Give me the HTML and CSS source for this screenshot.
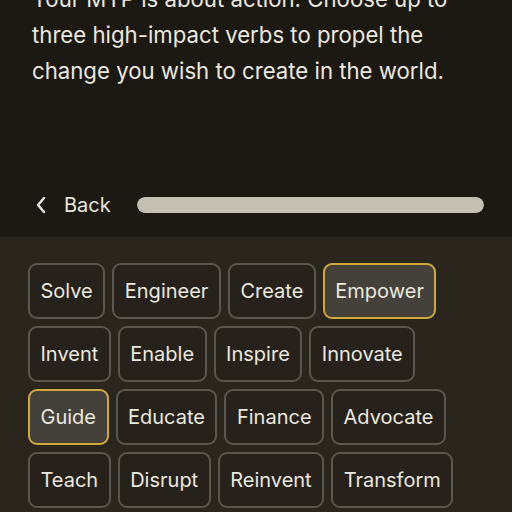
FILE: index.html
```html
<!DOCTYPE html>
<html lang="en">
<head>
  <meta charset="UTF-8">
  <title>Choose your verbs</title>
  <link rel="stylesheet" href="styles.css">
</head>
<body>
  <section class="intro">
    <p class="lead">Your MTP is about action. Choose up to three high-impact verbs to propel the change you wish to create in the world.</p>

    <div class="nav">
      <a href="#" class="back">
        <svg width="12" height="18" viewBox="0 0 12 18"><path d="M9 2 L3 9 L9 16" fill="none" stroke="#e8e5dc" stroke-width="2.4" stroke-linecap="round" stroke-linejoin="round"/></svg>
        <span>Back</span>
      </a>
      <div class="progress"><div class="progress-fill" style="width: 100%"></div></div>
    </div>
  </section>

  <section class="verbs">
    <div class="row">
      <button class="chip">Solve</button>
      <button class="chip">Engineer</button>
      <button class="chip">Create</button>
      <button class="chip selected">Empower</button>
    </div>
    <div class="row">
      <button class="chip">Invent</button>
      <button class="chip">Enable</button>
      <button class="chip">Inspire</button>
      <button class="chip">Innovate</button>
    </div>
    <div class="row">
      <button class="chip selected">Guide</button>
      <button class="chip">Educate</button>
      <button class="chip">Finance</button>
      <button class="chip">Advocate</button>
    </div>
    <div class="row">
      <button class="chip">Teach</button>
      <button class="chip">Disrupt</button>
      <button class="chip">Reinvent</button>
      <button class="chip">Transform</button>
    </div>
  </section>
</body>
</html>
```

FILE: styles.css
```css
/* Page */
body {
  margin: 0;
  width: 512px;
  height: 512px;
  overflow: hidden;
  font-family: Inter, 'Noto Sans', sans-serif;
  background: #2a251d;
  color: #ebe8df;
}

/* Top part with the prompt */
.intro {
  background: #1c1912;
  height: 237px;
  padding: 0 28px 21px 32px;
  box-sizing: border-box;
  display: flex;
  flex-direction: column;
}

.lead {
  margin: -19px 0 0;
  font-size: 22.2px;
  line-height: 36px;
  width: 445px;
  color: #ebe8df;
}

.nav {
  margin-top: auto;
  display: flex;
  align-items: center;
  height: 22px;
}

.back {
  display: flex;
  align-items: center;
  gap: 17px;
  margin-left: 3px;
  color: #e8e5dc;
  text-decoration: none;
  font-size: 20px;
}

.progress {
  flex: 1;
  margin-left: 26px;
  height: 16px;
  border-radius: 8px;
  background: #3a362e;
  overflow: hidden;
}

.progress-fill {
  height: 100%;
  background: #c3c0b3;
  border-radius: 8px;
}

/* Verb chips */
.verbs {
  padding: 26px 28px 0;
  display: flex;
  flex-direction: column;
  gap: 7px;
}

.row {
  display: flex;
  gap: 7px;
}

.chip {
  height: 56px;
  padding: 0 10.5px;
  font-family: Inter, 'Noto Sans', sans-serif;
  font-size: 20px;
  color: #ebe8df;
  background: #26221b;
  border: 2px solid #5b574e;
  border-radius: 9px;
  cursor: pointer;
}

.chip.selected {
  background: #44413b;
  border-color: #d1a93a;
}
```
